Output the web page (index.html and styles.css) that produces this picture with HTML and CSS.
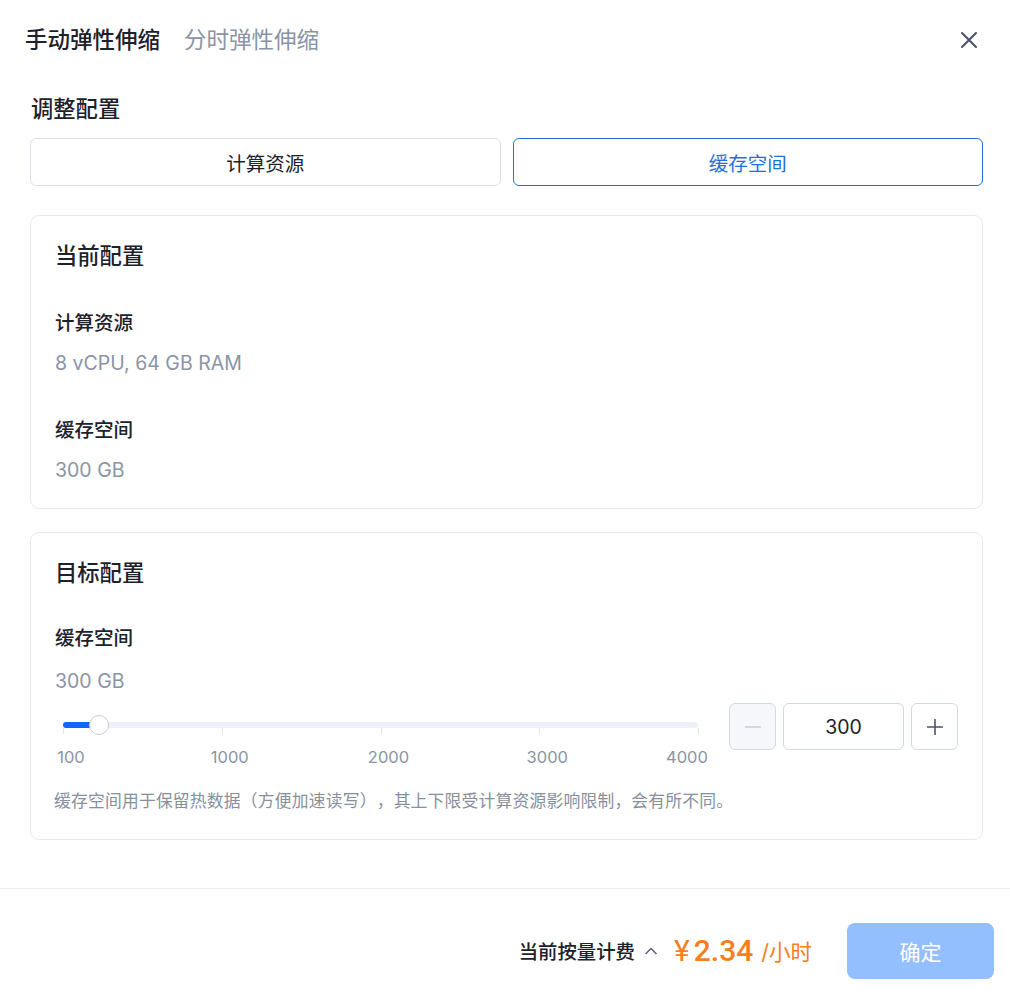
FILE: index.html
```html
<!DOCTYPE html>
<html lang="zh-CN">
<head>
<meta charset="utf-8">
<title>手动弹性伸缩</title>
<link rel="stylesheet" href="styles.css">
</head>
<body>
<div class="dialog">
  <header class="header">
    <nav class="tabs">
      <span class="tab active">手动弹性伸缩</span>
      <span class="tab">分时弹性伸缩</span>
    </nav>
    <button class="close" aria-label="关闭">
      <svg width="18" height="18" viewBox="0 0 18 18"><path d="M2 2 L16 16 M16 2 L2 16" stroke="#475266" stroke-width="2" stroke-linecap="round" fill="none"/></svg>
    </button>
  </header>

  <main class="body">
    <h2 class="section-title">调整配置</h2>
    <div class="toggle">
      <button class="toggle-btn">计算资源</button>
      <button class="toggle-btn selected">缓存空间</button>
    </div>

    <section class="card card-current">
      <h3 class="card-title">当前配置</h3>
      <div class="field first">
        <div class="label">计算资源</div>
        <div class="value">8 vCPU, 64 GB RAM</div>
      </div>
      <div class="field">
        <div class="label">缓存空间</div>
        <div class="value">300 GB</div>
      </div>
    </section>

    <section class="card card-target">
      <h3 class="card-title">目标配置</h3>
      <div class="field first">
        <div class="label">缓存空间</div>
        <div class="value value-target">300 GB</div>
      </div>
      <div class="slider-row">
        <div class="slider">
          <div class="track">
            <div class="fill" style="width: 5.2%"></div>
            <span class="tick" style="left: 0%"></span>
            <span class="tick" style="left: 25%"></span>
            <span class="tick" style="left: 50%"></span>
            <span class="tick" style="left: 75%"></span>
            <span class="tick" style="left: 100%"></span>
            <span class="thumb" style="left: 5.2%"></span>
            <span class="mark" style="left: calc(0% + 8px)">100</span>
            <span class="mark" style="left: calc(25% + 8px)">1000</span>
            <span class="mark" style="left: calc(50% + 8px)">2000</span>
            <span class="mark" style="left: calc(75% + 8px)">3000</span>
            <span class="mark" style="left: calc(100% - 11px)">4000</span>
          </div>
        </div>
        <div class="stepper">
          <button class="step minus" disabled>
            <svg width="18" height="18" viewBox="0 0 18 18"><path d="M1 9 H17" stroke="#c9cfd8" stroke-width="1.6"/></svg>
          </button>
          <div class="num">300</div>
          <button class="step plus">
            <svg width="18" height="18" viewBox="0 0 18 18"><path d="M1 9 H17 M9 1 V17" stroke="#4b5466" stroke-width="1.6"/></svg>
          </button>
        </div>
      </div>
      <p class="hint">缓存空间用于保留热数据（方便加速读写），其上下限受计算资源影响限制，会有所不同。</p>
    </section>
  </main>

  <footer class="footer">
    <div class="billing">
      <span class="billing-label">当前按量计费</span>
      <svg class="chev" width="14" height="10" viewBox="0 0 14 10"><path d="M1.5 8 L7 2.5 L12.5 8" stroke="#5c6678" stroke-width="1.5" fill="none"/></svg>
      <span class="price"><span class="yen">¥</span>2.34</span>
      <span class="unit">/小时</span>
    </div>
    <button class="confirm">确定</button>
  </footer>
</div>
</body>
</html>
```

FILE: styles.css
```css
* { box-sizing: border-box; }
html, body { margin: 0; padding: 0; background: #fff; }
body {
  font-family: "Inter", "Noto Sans CJK SC", "Noto Sans", sans-serif;
  color: #1d2129;
  width: 1010px;
  height: 1002px;
  overflow: hidden;
  text-spacing-trim: space-all;
}
button { font-family: inherit; cursor: pointer; }

.header {
  height: 80px;
  display: flex;
  align-items: center;
  justify-content: space-between;
  padding: 0 31px 0 25px;
}
.tabs { display: flex; gap: 24px; }
.tab {
  font-size: 22.5px;
  line-height: 32px;
  color: #8a94a6;
  font-weight: 400;
}
.tab.active { color: #1d2129; font-weight: 500; }
.close {
  border: 0; background: none; padding: 0;
  width: 20px; height: 20px;
  display: flex; align-items: center; justify-content: center;
}

.body { padding: 13px 27px 0 30px; }
.section-title {
  margin: 0 0 0 1px;
  font-size: 22.3px;
  line-height: 32px;
  font-weight: 500;
}
.toggle {
  margin-top: 13px;
  display: flex;
  gap: 12px;
}
.toggle-btn {
  flex: 1;
  height: 48px;
  border: 1px solid #dde1e7;
  background: #fff;
  border-radius: 6px;
  font-size: 19.5px;
  color: #1d2129;
}
.toggle-btn.selected {
  border: 1.5px solid #1f6fdc;
  color: #1f6fdc;
}

.card {
  border: 1px solid #e7eaef;
  border-radius: 9px;
  padding: 24px 24px 25px;
}
.card-current { margin-top: 29px; }
.card-target { margin-top: 23px; padding-bottom: 26px; }
.card-title {
  margin: 0;
  font-size: 22.3px;
  line-height: 32px;
  font-weight: 500;
}
.field.first { margin-top: 37px; }
.field { margin-top: 40px; }
.card-target .field.first { margin-top: 35px; }
.label {
  font-size: 19.5px;
  line-height: 28px;
  font-weight: 500;
  color: #1d2129;
}
.value {
  margin-top: 13px;
  font-size: 19.5px;
  line-height: 26px;
  color: #8a94a6;
}
.value-target { margin-top: 16px; }

.slider-row {
  margin-top: 9px;
  display: flex;
  align-items: flex-start;
  gap: 22px;
}
.slider {
  flex: 1;
  height: 47px;
  padding: 19px 9px 0 8px;
}
.track {
  position: relative;
  height: 6px;
  background: #edf1f7;
  border-radius: 3px;
}
.fill {
  height: 6px;
  background: #1664ff;
  border-radius: 3px;
}
.tick {
  position: absolute;
  top: 6px;
  width: 1px;
  height: 6px;
  background: #e1e6ec;
}
.thumb {
  position: absolute;
  top: 50%;
  width: 20px;
  height: 20px;
  margin: -10px 0 0 -7px;
  border-radius: 50%;
  background: #fff;
  border: 1.5px solid #c6cfdb;
}
.mark {
  position: absolute;
  top: 25px;
  transform: translateX(-50%);
  font-size: 16.5px;
  line-height: 20px;
  color: #8a94a6;
  white-space: nowrap;
}
.stepper {
  display: flex;
  align-items: center;
}
.step {
  width: 47px;
  height: 47px;
  border: 1px solid #d3d9e1;
  border-radius: 6px;
  background: #fff;
  display: flex; align-items: center; justify-content: center;
  padding: 0;
}
.step.minus { background: #f5f7fb; cursor: not-allowed; }
.num {
  width: 121px;
  height: 47px;
  margin: 0 7px 0 7px;
  border: 1px solid #d3d9e1;
  border-radius: 6px;
  display: flex; align-items: center; justify-content: center;
  font-size: 19.5px;
  color: #1d2129;
}
.hint {
  margin: 39px 0 0 -1px;
  font-size: 16.8px;
  line-height: 24px;
  letter-spacing: 0.2px;
  color: #86909c;
}

.footer {
  position: absolute;
  left: 0; right: 0; top: 888px;
  border-top: 1px solid #e9ecf0;
  height: 114px;
  display: flex;
  align-items: center;
  justify-content: flex-end;
  padding: 10px 16px 0 0;
}
.billing {
  display: flex;
  align-items: center;
  margin-right: 35px;
}
.billing-label {
  font-size: 19.4px;
  font-weight: 500;
  color: #1d2129;
}
.chev { margin: 0 16px 0 9px; }
.price {
  font-family: "Roboto", "Inter", sans-serif;
  font-size: 30px;
  font-weight: 500;
  color: #f77e1a;
}
.yen { font-weight: 400; margin-right: 4px; }
.unit {
  margin-left: 8px;
  font-size: 21.5px;
  color: #f77e1a;
}
.confirm {
  width: 147px;
  height: 56px;
  border: 0;
  border-radius: 8px;
  background: #94bfff;
  color: #fff;
  font-size: 21px;
}
```
